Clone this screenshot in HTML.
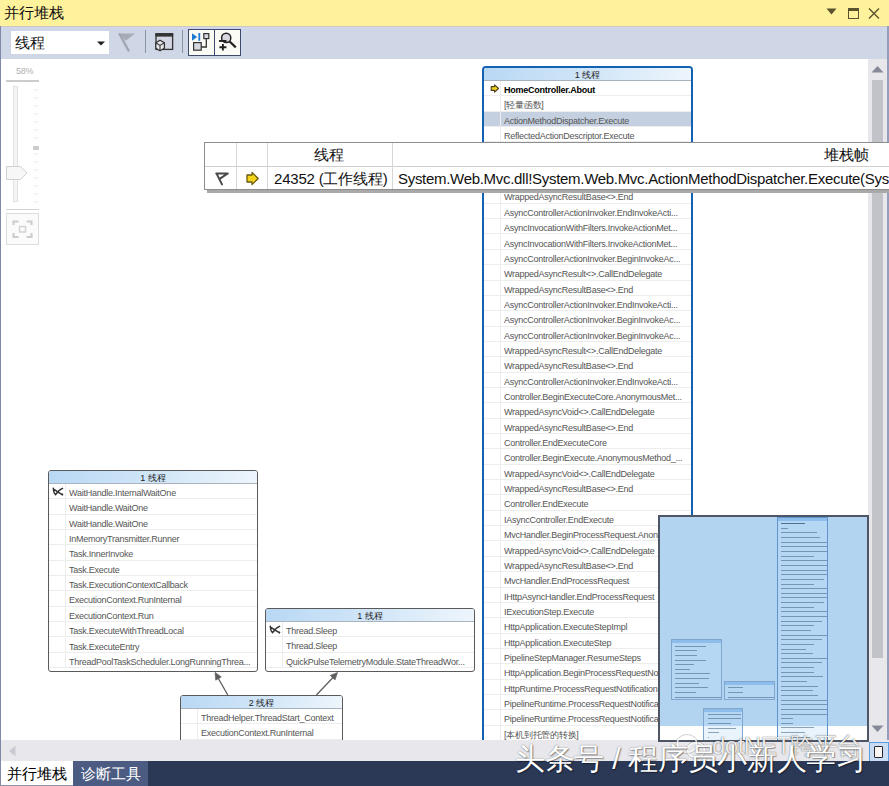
<!DOCTYPE html>
<html><head><meta charset="utf-8"><style>
*{box-sizing:border-box}
html,body{margin:0;padding:0;width:889px;height:786px;overflow:hidden;background:#fff;font-family:'Liberation Sans',sans-serif}
.abs{position:absolute}
#title{position:absolute;left:0;top:0;width:889px;height:26px;background:#FFF29D;}
#title .t{position:absolute;left:4px;top:4px;font-size:15px;font-weight:500;line-height:18px;color:#111}
#tb{position:absolute;left:0;top:26px;width:889px;height:33px;background:#CFD6E5}
#canvas{position:absolute;left:2px;top:59px;width:866px;height:681px;overflow:hidden}
.node{position:absolute;border:1px solid #5a5a5a;border-radius:3px;background:#fff;overflow:hidden}
.node.cur{border:2px solid #1262B4;border-radius:4px}
.hdr{position:absolute;left:0;top:0;right:0;height:13px;background:linear-gradient(100deg,#B9D8F4 0%,#D3E7F8 55%,#EEF5FC 100%);border-bottom:1px solid #A9B3BE;text-align:center;font-size:9px;line-height:14px;color:#222}
.row{position:absolute;left:0;right:0;height:15.35px;border-bottom:1px solid #EDEDED;font-size:9px;line-height:15px;color:#555;white-space:nowrap;letter-spacing:-0.25px}
.row span{position:absolute;left:20px;top:2px}
.row:before{content:"";position:absolute;left:16px;top:0;bottom:0;border-left:1px solid #EDEDED}
.row.hl{background:#C4CFDF}
.row.bold{font-weight:bold;color:#000}
.ic{position:absolute}
</style></head><body>
<div id="title"><div class="t">并行堆栈</div>
<svg class="abs" style="left:826px;top:8px" width="11" height="7"><path d="M0.5 0.5h10L5.5 6.5z" fill="#5A522E"/></svg>
<svg class="abs" style="left:848px;top:8px" width="11" height="11"><rect x="0.5" y="0.5" width="10" height="10" fill="none" stroke="#5A522E"/><rect x="0" y="0" width="11" height="3" fill="#5A522E"/></svg>
<svg class="abs" style="left:868px;top:8px" width="12" height="11"><path d="M1 0.5l10 10M11 0.5l-10 10" stroke="#5A522E" stroke-width="1.4"/></svg>
</div>
<div id="tb">
<div class="abs" style="left:0;top:0;width:889px;height:1px;background:#CACBC0"></div>
<div class="abs" style="left:0;top:1px;width:889px;height:2px;background:#D3D5EC"></div>
<div class="abs" style="left:11px;top:5px;width:98px;height:23px;background:#fff"></div>
<div class="abs" style="left:15px;top:7px;font-size:15px;font-weight:500;line-height:20px;color:#111">线程</div>
<svg class="abs" style="left:97px;top:15px" width="8" height="5"><path d="M0 0.5h8L4 4.5z" fill="#1E1E1E"/></svg>
<svg class="abs" style="left:118px;top:7px" width="18" height="19"><path d="M0.6 0.4h16.4L7.8 7.8z" fill="#A6ABB6"/><path d="M1.6 1.2L10.6 17.6" stroke="#A0A5B0" stroke-width="2.2" stroke-linecap="round"/></svg>
<div class="abs" style="left:145px;top:4px;width:1px;height:23px;background:#8A93A8"></div>
<svg class="abs" style="left:155px;top:7px" width="19" height="19"><rect x="1" y="0.8" width="16.6" height="15.6" fill="#D3D6E2" stroke="#333" stroke-width="1.3"/><rect x="0.4" y="0.2" width="17.8" height="3.4" fill="#333"/><path d="M0.8 9.8l4.2-2.6 4.4 2.6v5.4l-4.4 2.6-4.2-2.6z" fill="#E8E8EC" stroke="#333" stroke-width="1.3" stroke-linejoin="round"/><path d="M0.8 9.8l4.2 2.6 4.4-2.6M5 12.4v5.4" stroke="#333" stroke-width="1.1" fill="none"/></svg>
<div class="abs" style="left:182px;top:4px;width:1px;height:23px;background:#8A93A8"></div>
<div class="abs" style="left:188px;top:3px;width:27px;height:27px;background:#FBFBF6;border:1.5px solid #3E4A6C"></div>
<div class="abs" style="left:214px;top:3px;width:27px;height:27px;background:#FBFBF6;border:1.5px solid #3E4A6C"></div>
<svg class="abs" style="left:190px;top:6px" width="22" height="22"><path d="M2 1.2v7.6l5.2-3.8z" fill="#1C7BD2"/><rect x="8.4" y="1" width="1.8" height="7.8" fill="#1C7BD2"/><rect x="13.8" y="1.6" width="5" height="5" fill="#D8D8E0" stroke="#333" stroke-width="1.2"/><rect x="3.6" y="10.6" width="7.6" height="7.6" fill="#D8D8E0" stroke="#333" stroke-width="1.2"/><path d="M16.3 6.6v8.4h-5" stroke="#333" fill="none" stroke-width="1.3"/></svg>
<svg class="abs" style="left:216px;top:6px" width="22" height="22"><circle cx="10.2" cy="5.9" r="4.6" fill="#D8D8E0" stroke="#222" stroke-width="1.5"/><path d="M13.4 9.2l6.4 6.2" stroke="#222" stroke-width="2.2"/><rect x="3" y="8" width="7.5" height="1.9" fill="#222"/><path d="M3.4 15.2h7M6.9 12v6.4" stroke="#222" stroke-width="1.9"/></svg>
</div>
<div class="abs" style="left:0;top:26px;width:1px;height:760px;background:#8089A8"></div>
<div class="abs" style="left:16px;top:66px;font-size:9px;line-height:10px;color:#B0B0B0;letter-spacing:-0.3px">58%</div>
<div class="abs" style="left:6px;top:80px;width:33px;height:1.5px;background:#CCCCCC"></div>
<div class="abs" style="left:13px;top:86px;width:5px;height:116px;border:1px solid #E2E2E2;background:#F4F4F4"></div>
<svg class="abs" style="left:0;top:84px" width="45" height="126">
<g stroke="#EBEBEB" stroke-width="1"><path d="M33 6h5M33 14h5M33 22h5M33 30h5M33 38h5M33 46h5M33 54h5M33 70h5M33 78h5M33 86h5M33 94h5M33 102h5M33 110h5M33 118h5"/></g>
<path d="M33 63h6M33 65h6" stroke="#999" stroke-width="1.2"/>
<path d="M6.5 82.5h14l6.5 6.5-6.5 6.5h-14z" fill="#F7F7F7" stroke="#D0D0D0"/>
<path d="M6 125.5h33" stroke="#D4D4D4"/>
</svg>
<div class="abs" style="left:6px;top:213px;width:33px;height:32px;border:1px solid #DDDDDD;background:#FBFBFB"></div>
<svg class="abs" style="left:12px;top:219px" width="22" height="21"><g fill="none" stroke="#CDCDCD" stroke-width="2.2"><path d="M1.5 6V2.5h5M14.5 2.5h5V6M19.5 14v4h-5M6.5 18h-5v-4"/></g><rect x="7.5" y="7.5" width="6" height="5.5" fill="none" stroke="#D2D2D2" stroke-width="1.4"/></svg>
<div class="abs" style="left:868px;top:59px;width:19px;height:681px;background:#E8E8EC"></div>
<svg class="abs" style="left:868px;top:63px" width="19" height="12"><path d="M3.5 9.5h12L9.5 3z" fill="#868999"/></svg>
<div class="abs" style="left:872px;top:80px;width:11px;height:578px;background:#C2C3C9"></div>
<svg class="abs" style="left:868px;top:723px" width="19" height="12"><path d="M3.5 2.5h12L9.5 9z" fill="#868999"/></svg>
<div class="abs" style="left:887px;top:26px;width:2px;height:735px;background:#939EBB"></div>
<div class="abs" style="left:1px;top:740px;width:867px;height:21px;background:#E8E8EC"></div>
<svg class="abs" style="left:6px;top:744px" width="12" height="14"><path d="M9.5 1.5v11L3 7z" fill="#C9CAD2"/></svg>
<div class="abs" style="left:868px;top:740px;width:21px;height:21px;background:#E8E8EC"></div>
<div class="abs" style="left:869px;top:742px;width:20px;height:20px;border:1px solid #5A9BE0;background:#C9DEF5"></div>
<div class="abs" style="left:874px;top:746px;width:9px;height:12px;border:1.5px solid #2A2A2A;background:#FBF6F6;border-radius:1px"></div>
<div class="abs" style="left:0;top:761px;width:889px;height:25px;background:#2B3856"></div>
<div class="abs" style="left:1px;top:761px;width:72px;height:24px;background:#FFFFFF"></div>
<div class="abs" style="left:0;top:761px;width:1px;height:25px;background:#8089A8"></div>
<div class="abs" style="left:0;top:785px;width:73px;height:1px;background:#8C93A8"></div>
<div class="abs" style="left:73px;top:761px;width:75px;height:25px;background:#4B5B82"></div>
<div class="abs" style="left:7px;top:764px;font-size:15px;font-weight:500;line-height:20px;color:#000">并行堆栈</div>
<div class="abs" style="left:81px;top:764px;font-size:15px;line-height:20px;color:#fff">诊断工具</div>
<div id="canvas">
<div class="node" style="left:46px;top:411px;width:210px;height:202.20px">
<div class="hdr">1 线程</div>
<div class="row" style="top:13.00px"><svg class="ic" style="left:3px;top:3px" width="12" height="9" viewBox="0 0 12 9"><path d="M1.3 1.2Q1.8 6.5 3.6 7.6Q6.5 3 10.6 1.4M2.4 2.6Q6.5 5.6 10.4 7.6" stroke="#333" stroke-width="1.5" fill="none" stroke-linecap="round"/><circle cx="10.3" cy="7.4" r="1" fill="#333"/></svg><span>WaitHandle.InternalWaitOne</span></div>
<div class="row" style="top:28.35px"><span>WaitHandle.WaitOne</span></div>
<div class="row" style="top:43.70px"><span>WaitHandle.WaitOne</span></div>
<div class="row" style="top:59.05px"><span>InMemoryTransmitter.Runner</span></div>
<div class="row" style="top:74.40px"><span>Task.InnerInvoke</span></div>
<div class="row" style="top:89.75px"><span>Task.Execute</span></div>
<div class="row" style="top:105.10px"><span>Task.ExecutionContextCallback</span></div>
<div class="row" style="top:120.45px"><span>ExecutionContext.RunInternal</span></div>
<div class="row" style="top:135.80px"><span>ExecutionContext.Run</span></div>
<div class="row" style="top:151.15px"><span>Task.ExecuteWithThreadLocal</span></div>
<div class="row" style="top:166.50px"><span>Task.ExecuteEntry</span></div>
<div class="row" style="top:181.85px"><span>ThreadPoolTaskScheduler.LongRunningThrea...</span></div>
</div>
<div class="node" style="left:263px;top:549px;width:210px;height:64.05px">
<div class="hdr">1 线程</div>
<div class="row" style="top:13.00px"><svg class="ic" style="left:3px;top:3px" width="12" height="9" viewBox="0 0 12 9"><path d="M1.3 1.2Q1.8 6.5 3.6 7.6Q6.5 3 10.6 1.4M2.4 2.6Q6.5 5.6 10.4 7.6" stroke="#333" stroke-width="1.5" fill="none" stroke-linecap="round"/><circle cx="10.3" cy="7.4" r="1" fill="#333"/></svg><span>Thread.Sleep</span></div>
<div class="row" style="top:28.35px"><span>Thread.Sleep</span></div>
<div class="row" style="top:43.70px"><span>QuickPulseTelemetryModule.StateThreadWor...</span></div>
</div>
<div class="node" style="left:178px;top:636px;width:163px;height:64.05px">
<div class="hdr">2 线程</div>
<div class="row" style="top:13.00px"><span>ThreadHelper.ThreadStart_Context</span></div>
<div class="row" style="top:28.35px"><span>ExecutionContext.RunInternal</span></div>
<div class="row" style="top:43.70px"><span>ExecutionContext.Run</span></div>
</div>
<div class="node cur" style="left:480px;top:7px;width:211px;height:693.40px">
<div class="hdr">1 线程</div>
<div class="row bold" style="top:13.00px"><svg class="ic" style="left:5.5px;top:3px" width="10" height="9" viewBox="0 0 10 9"><path d="M1.2 2.6h3.4V0.9l3.9 3.6-3.9 3.6V6.4H1.2z" fill="#F2D21B" stroke="#4a4020" stroke-width="1.1" stroke-linejoin="round"/></svg><span>HomeController.About</span></div>
<div class="row" style="top:28.35px"><span>[轻量函数]</span></div>
<div class="row hl" style="top:43.70px"><span>ActionMethodDispatcher.Execute</span></div>
<div class="row" style="top:59.05px"><span>ReflectedActionDescriptor.Execute</span></div>
<div class="row" style="top:74.40px"><span>ControllerActionInvoker.InvokeActionMethod</span></div>
<div class="row" style="top:89.75px"><span>AsyncControllerActionInvoker.EndInvokeActi...</span></div>
<div class="row" style="top:105.10px"><span>AsyncControllerActionInvoker.BeginInvokeAc...</span></div>
<div class="row" style="top:120.45px"><span>WrappedAsyncResultBase&lt;&gt;.End</span></div>
<div class="row" style="top:135.80px"><span>AsyncControllerActionInvoker.EndInvokeActi...</span></div>
<div class="row" style="top:151.15px"><span>AsyncInvocationWithFilters.InvokeActionMet...</span></div>
<div class="row" style="top:166.50px"><span>AsyncInvocationWithFilters.InvokeActionMet...</span></div>
<div class="row" style="top:181.85px"><span>AsyncControllerActionInvoker.BeginInvokeAc...</span></div>
<div class="row" style="top:197.20px"><span>WrappedAsyncResult&lt;&gt;.CallEndDelegate</span></div>
<div class="row" style="top:212.55px"><span>WrappedAsyncResultBase&lt;&gt;.End</span></div>
<div class="row" style="top:227.90px"><span>AsyncControllerActionInvoker.EndInvokeActi...</span></div>
<div class="row" style="top:243.25px"><span>AsyncControllerActionInvoker.BeginInvokeAc...</span></div>
<div class="row" style="top:258.60px"><span>AsyncControllerActionInvoker.BeginInvokeAc...</span></div>
<div class="row" style="top:273.95px"><span>WrappedAsyncResult&lt;&gt;.CallEndDelegate</span></div>
<div class="row" style="top:289.30px"><span>WrappedAsyncResultBase&lt;&gt;.End</span></div>
<div class="row" style="top:304.65px"><span>AsyncControllerActionInvoker.EndInvokeActi...</span></div>
<div class="row" style="top:320.00px"><span>Controller.BeginExecuteCore.AnonymousMet...</span></div>
<div class="row" style="top:335.35px"><span>WrappedAsyncVoid&lt;&gt;.CallEndDelegate</span></div>
<div class="row" style="top:350.70px"><span>WrappedAsyncResultBase&lt;&gt;.End</span></div>
<div class="row" style="top:366.05px"><span>Controller.EndExecuteCore</span></div>
<div class="row" style="top:381.40px"><span>Controller.BeginExecute.AnonymousMethod_...</span></div>
<div class="row" style="top:396.75px"><span>WrappedAsyncVoid&lt;&gt;.CallEndDelegate</span></div>
<div class="row" style="top:412.10px"><span>WrappedAsyncResultBase&lt;&gt;.End</span></div>
<div class="row" style="top:427.45px"><span>Controller.EndExecute</span></div>
<div class="row" style="top:442.80px"><span>IAsyncController.EndExecute</span></div>
<div class="row" style="top:458.15px"><span>MvcHandler.BeginProcessRequest.AnonymousMet...</span></div>
<div class="row" style="top:473.50px"><span>WrappedAsyncVoid&lt;&gt;.CallEndDelegate</span></div>
<div class="row" style="top:488.85px"><span>WrappedAsyncResultBase&lt;&gt;.End</span></div>
<div class="row" style="top:504.20px"><span>MvcHandler.EndProcessRequest</span></div>
<div class="row" style="top:519.55px"><span>IHttpAsyncHandler.EndProcessRequest</span></div>
<div class="row" style="top:534.90px"><span>IExecutionStep.Execute</span></div>
<div class="row" style="top:550.25px"><span>HttpApplication.ExecuteStepImpl</span></div>
<div class="row" style="top:565.60px"><span>HttpApplication.ExecuteStep</span></div>
<div class="row" style="top:580.95px"><span>PipelineStepManager.ResumeSteps</span></div>
<div class="row" style="top:596.30px"><span>HttpApplication.BeginProcessRequestNotification</span></div>
<div class="row" style="top:611.65px"><span>HttpRuntime.ProcessRequestNotificationPrivate</span></div>
<div class="row" style="top:627.00px"><span>PipelineRuntime.ProcessRequestNotificationHelper</span></div>
<div class="row" style="top:642.35px"><span>PipelineRuntime.ProcessRequestNotification</span></div>
<div class="row" style="top:657.70px"><span>[本机到托管的转换]</span></div>
<div class="row" style="top:673.05px"><span>[托管到本机的转换]</span></div>
</div>
</div>
<svg class="abs" style="left:0;top:0" width="889" height="786">
<g stroke="#5E5E5E" stroke-width="1.3" fill="#5E5E5E">
<path d="M227.8 695L217.5 677" fill="none"/><path d="M215 672.3L221.3 677L215.7 680.2z" stroke-width="0.6"/>
<path d="M316.4 695L333.5 677" fill="none"/><path d="M337.6 672.4L335 680L330.2 675.4z" stroke-width="0.6"/>
</g></svg>
<div class="abs" style="left:207px;top:189px;width:682px;height:4px;background:#A9A9A9"></div>
<div class="abs" style="left:204px;top:142px;width:690px;height:48px;background:#fff;border:1px solid #8E8E8E;border-right:none"></div>
<div class="abs" style="left:205px;top:166px;width:684px;height:1px;background:#CFCFCF"></div>
<div class="abs" style="left:236px;top:143px;width:1px;height:46px;background:#D6D6D6"></div>
<div class="abs" style="left:267px;top:143px;width:1px;height:46px;background:#D6D6D6"></div>
<div class="abs" style="left:392px;top:143px;width:1px;height:46px;background:#D6D6D6"></div>
<div class="abs" style="left:314px;top:146px;font-size:15px;line-height:18px;color:#111">线程</div>
<div class="abs" style="left:824px;top:146px;font-size:15px;line-height:18px;color:#111">堆栈帧</div>
<svg class="abs" style="left:214px;top:171px" width="16" height="16"><path d="M2.2 2.4h11.6L6 7.6M2.6 2.6L8 13.4" stroke="#4A4A4A" stroke-width="2" fill="none" stroke-linejoin="round" stroke-linecap="round"/></svg>
<svg class="abs" style="left:245px;top:171px" width="16" height="15"><path d="M2 4h5V1.4l6.2 6.1-6.2 6.1V11H2z" fill="#F4D41A" stroke="#6A5A10" stroke-width="1.3" stroke-linejoin="round"/></svg>
<div class="abs" style="left:274px;top:169px;font-size:15px;line-height:20px;color:#111;white-space:nowrap;letter-spacing:-0.2px">24352 (工作线程)</div>
<div class="abs" style="left:398px;top:169px;font-size:15px;line-height:20px;color:#111;white-space:nowrap;letter-spacing:-0.3px">System.Web.Mvc.dll!System.Web.Mvc.ActionMethodDispatcher.Execute(System.Web.Mvc.ControllerBase</div>
<div class="abs" style="left:658px;top:515px;width:211px;height:227px;background:#fff;border:2px solid #4E5666;overflow:hidden">
<div class="abs" style="left:0;top:0;width:207px;height:209px;background:#B3D4F1"></div>
<div class="abs" style="left:10.8px;top:122.4px;width:51.2px;height:60.9px;border:1px solid #7FA6CC;background:rgba(190,220,246,.35)"></div>
<div class="abs" style="left:11.8px;top:123.4px;width:49.2px;height:3px;background:#8DBDEB"></div>
<div class="abs" style="left:15.3px;top:128.5px;width:31.1px;height:1px;background:#3E5E80;opacity:.55"></div>
<div class="abs" style="left:15.3px;top:133.2px;width:21.5px;height:1px;background:#3E5E80;opacity:.55"></div>
<div class="abs" style="left:15.3px;top:137.8px;width:21.5px;height:1px;background:#3E5E80;opacity:.55"></div>
<div class="abs" style="left:15.3px;top:142.5px;width:31.1px;height:1px;background:#3E5E80;opacity:.55"></div>
<div class="abs" style="left:15.3px;top:147.1px;width:19.1px;height:1px;background:#3E5E80;opacity:.55"></div>
<div class="abs" style="left:15.3px;top:151.7px;width:14.3px;height:1px;background:#3E5E80;opacity:.55"></div>
<div class="abs" style="left:15.3px;top:156.4px;width:34.6px;height:1px;background:#3E5E80;opacity:.55"></div>
<div class="abs" style="left:15.3px;top:161.0px;width:33.4px;height:1px;background:#3E5E80;opacity:.55"></div>
<div class="abs" style="left:15.3px;top:165.7px;width:23.9px;height:1px;background:#3E5E80;opacity:.55"></div>
<div class="abs" style="left:15.3px;top:170.3px;width:32.3px;height:1px;background:#3E5E80;opacity:.55"></div>
<div class="abs" style="left:15.3px;top:175.0px;width:20.3px;height:1px;background:#3E5E80;opacity:.55"></div>
<div class="abs" style="left:15.3px;top:179.6px;width:45.3px;height:1px;background:#3E5E80;opacity:.55"></div>
<div class="abs" style="left:63.8px;top:164.2px;width:51.2px;height:19.1px;border:1px solid #7FA6CC;background:rgba(190,220,246,.35)"></div>
<div class="abs" style="left:64.8px;top:165.2px;width:49.2px;height:3px;background:#8DBDEB"></div>
<div class="abs" style="left:68.3px;top:170.3px;width:14.3px;height:1px;background:#3E5E80;opacity:.55"></div>
<div class="abs" style="left:68.3px;top:175.0px;width:14.3px;height:1px;background:#3E5E80;opacity:.55"></div>
<div class="abs" style="left:68.3px;top:179.6px;width:45.3px;height:1px;background:#3E5E80;opacity:.55"></div>
<div class="abs" style="left:43.0px;top:190.6px;width:39.7px;height:33.0px;border:1px solid #7FA6CC;background:rgba(190,220,246,.35)"></div>
<div class="abs" style="left:44.0px;top:191.6px;width:37.7px;height:3px;background:#8DBDEB"></div>
<div class="abs" style="left:47.5px;top:196.7px;width:33.9px;height:1px;background:#3E5E80;opacity:.55"></div>
<div class="abs" style="left:47.5px;top:201.3px;width:33.4px;height:1px;background:#3E5E80;opacity:.55"></div>
<div class="abs" style="left:47.5px;top:206.0px;width:23.9px;height:1px;background:#3E5E80;opacity:.55"></div>
<div class="abs" style="left:47.5px;top:210.6px;width:28.7px;height:1px;background:#3E5E80;opacity:.55"></div>
<div class="abs" style="left:47.5px;top:215.3px;width:11.9px;height:1px;background:#3E5E80;opacity:.55"></div>
<div class="abs" style="left:47.5px;top:219.9px;width:1.2px;height:1px;background:#3E5E80;opacity:.55"></div>
<div class="abs" style="left:116.5px;top:0.0px;width:51.4px;height:228.0px;border:1px solid #5F95CC;background:rgba(190,220,246,.35)"></div>
<div class="abs" style="left:117.5px;top:1.0px;width:49.4px;height:3px;background:#8DBDEB"></div>
<div class="abs" style="left:121.0px;top:6.1px;width:23.9px;height:1px;background:#3E5E80;opacity:.85"></div>
<div class="abs" style="left:121.0px;top:10.8px;width:7.2px;height:1px;background:#3E5E80;opacity:.55"></div>
<div class="abs" style="left:121.0px;top:15.4px;width:35.8px;height:1px;background:#3E5E80;opacity:.55"></div>
<div class="abs" style="left:121.0px;top:20.1px;width:39.4px;height:1px;background:#3E5E80;opacity:.55"></div>
<div class="abs" style="left:121.0px;top:24.7px;width:45.6px;height:1px;background:#3E5E80;opacity:.55"></div>
<div class="abs" style="left:121.0px;top:29.4px;width:45.6px;height:1px;background:#3E5E80;opacity:.55"></div>
<div class="abs" style="left:121.0px;top:34.0px;width:45.6px;height:1px;background:#3E5E80;opacity:.55"></div>
<div class="abs" style="left:121.0px;top:38.6px;width:33.4px;height:1px;background:#3E5E80;opacity:.55"></div>
<div class="abs" style="left:121.0px;top:43.3px;width:45.6px;height:1px;background:#3E5E80;opacity:.55"></div>
<div class="abs" style="left:121.0px;top:47.9px;width:45.6px;height:1px;background:#3E5E80;opacity:.55"></div>
<div class="abs" style="left:121.0px;top:52.6px;width:45.6px;height:1px;background:#3E5E80;opacity:.55"></div>
<div class="abs" style="left:121.0px;top:57.2px;width:45.6px;height:1px;background:#3E5E80;opacity:.55"></div>
<div class="abs" style="left:121.0px;top:61.9px;width:43.0px;height:1px;background:#3E5E80;opacity:.55"></div>
<div class="abs" style="left:121.0px;top:66.5px;width:33.4px;height:1px;background:#3E5E80;opacity:.55"></div>
<div class="abs" style="left:121.0px;top:71.1px;width:45.6px;height:1px;background:#3E5E80;opacity:.55"></div>
<div class="abs" style="left:121.0px;top:75.8px;width:45.6px;height:1px;background:#3E5E80;opacity:.55"></div>
<div class="abs" style="left:121.0px;top:80.4px;width:45.6px;height:1px;background:#3E5E80;opacity:.55"></div>
<div class="abs" style="left:121.0px;top:85.1px;width:43.0px;height:1px;background:#3E5E80;opacity:.55"></div>
<div class="abs" style="left:121.0px;top:89.7px;width:33.4px;height:1px;background:#3E5E80;opacity:.55"></div>
<div class="abs" style="left:121.0px;top:94.4px;width:45.6px;height:1px;background:#3E5E80;opacity:.55"></div>
<div class="abs" style="left:121.0px;top:99.0px;width:45.6px;height:1px;background:#3E5E80;opacity:.55"></div>
<div class="abs" style="left:121.0px;top:103.7px;width:40.6px;height:1px;background:#3E5E80;opacity:.55"></div>
<div class="abs" style="left:121.0px;top:108.3px;width:33.4px;height:1px;background:#3E5E80;opacity:.55"></div>
<div class="abs" style="left:121.0px;top:112.9px;width:29.9px;height:1px;background:#3E5E80;opacity:.55"></div>
<div class="abs" style="left:121.0px;top:117.6px;width:45.6px;height:1px;background:#3E5E80;opacity:.55"></div>
<div class="abs" style="left:121.0px;top:122.2px;width:40.6px;height:1px;background:#3E5E80;opacity:.55"></div>
<div class="abs" style="left:121.0px;top:126.9px;width:33.4px;height:1px;background:#3E5E80;opacity:.55"></div>
<div class="abs" style="left:121.0px;top:131.5px;width:25.1px;height:1px;background:#3E5E80;opacity:.55"></div>
<div class="abs" style="left:121.0px;top:136.2px;width:32.3px;height:1px;background:#3E5E80;opacity:.55"></div>
<div class="abs" style="left:121.0px;top:140.8px;width:45.6px;height:1px;background:#3E5E80;opacity:.55"></div>
<div class="abs" style="left:121.0px;top:145.4px;width:40.6px;height:1px;background:#3E5E80;opacity:.55"></div>
<div class="abs" style="left:121.0px;top:150.1px;width:33.4px;height:1px;background:#3E5E80;opacity:.55"></div>
<div class="abs" style="left:121.0px;top:154.7px;width:33.4px;height:1px;background:#3E5E80;opacity:.55"></div>
<div class="abs" style="left:121.0px;top:159.4px;width:41.8px;height:1px;background:#3E5E80;opacity:.55"></div>
<div class="abs" style="left:121.0px;top:164.0px;width:26.3px;height:1px;background:#3E5E80;opacity:.55"></div>
<div class="abs" style="left:121.0px;top:168.7px;width:37.0px;height:1px;background:#3E5E80;opacity:.55"></div>
<div class="abs" style="left:121.0px;top:173.3px;width:32.3px;height:1px;background:#3E5E80;opacity:.55"></div>
<div class="abs" style="left:121.0px;top:177.9px;width:37.0px;height:1px;background:#3E5E80;opacity:.55"></div>
<div class="abs" style="left:121.0px;top:182.6px;width:45.6px;height:1px;background:#3E5E80;opacity:.55"></div>
<div class="abs" style="left:121.0px;top:187.2px;width:45.6px;height:1px;background:#3E5E80;opacity:.55"></div>
<div class="abs" style="left:121.0px;top:191.9px;width:45.6px;height:1px;background:#3E5E80;opacity:.55"></div>
<div class="abs" style="left:121.0px;top:196.5px;width:45.6px;height:1px;background:#3E5E80;opacity:.55"></div>
<div class="abs" style="left:121.0px;top:201.2px;width:11.9px;height:1px;background:#3E5E80;opacity:.55"></div>
<div class="abs" style="left:121.0px;top:205.8px;width:11.9px;height:1px;background:#3E5E80;opacity:.55"></div>
<div class="abs" style="left:121.0px;top:210.4px;width:33.4px;height:1px;background:#3E5E80;opacity:.55"></div>
<div class="abs" style="left:121.0px;top:215.1px;width:23.9px;height:1px;background:#3E5E80;opacity:.55"></div>
<div class="abs" style="left:121.0px;top:219.7px;width:28.7px;height:1px;background:#3E5E80;opacity:.55"></div>
<div class="abs" style="left:121.0px;top:224.4px;width:11.9px;height:1px;background:#3E5E80;opacity:.55"></div>
</div>
<svg class="abs" style="left:674px;top:733px" width="34" height="28"><g fill="none" stroke="rgba(255,255,255,.9)" stroke-width="1.6"><ellipse cx="13" cy="11" rx="10" ry="8.5"/><ellipse cx="22" cy="17" rx="9" ry="7.5"/></g><g fill="none" stroke="rgba(0,0,0,.3)" stroke-width="0.6"><ellipse cx="13" cy="11" rx="11" ry="9.5"/><ellipse cx="22" cy="17" rx="10" ry="8.5"/></g></svg>
<div class="abs" style="left:712px;top:730px;font-size:24px;font-weight:400;line-height:32px;color:rgba(255,255,255,.92);white-space:nowrap;text-shadow:0 0 1.2px rgba(0,0,0,.8);letter-spacing:-0.5px">dotNET跨平台</div>
<div class="abs" style="left:515px;top:738px;font-size:30px;font-weight:300;line-height:42px;color:#fff;white-space:nowrap;text-shadow:0 0 1.5px rgba(0,0,0,.5),1px 1px 1px rgba(0,0,0,.35);letter-spacing:-0.3px">头条号 / 程序员小新人学习</div>
</body></html>
